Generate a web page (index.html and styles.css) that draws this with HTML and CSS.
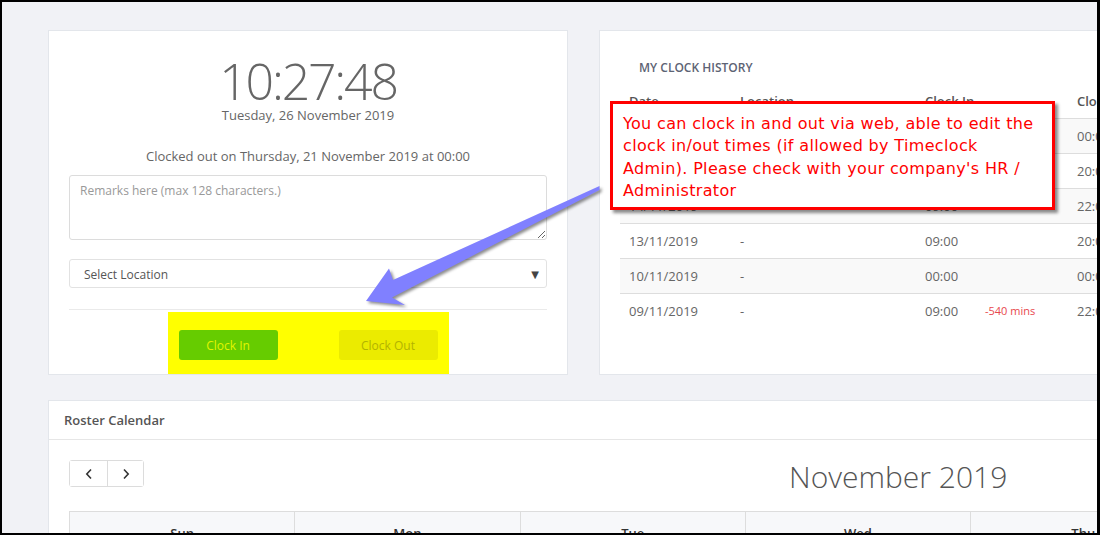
FILE: index.html
```html
<!DOCTYPE html>
<html lang="en">
<head>
    <meta charset="UTF-8">
    <meta name="viewport" content="width=device-width, initial-scale=1.0">
    <title>Timeclock</title>
    <link rel="stylesheet" href="styles.css">
</head>
<body>
    <div class="frame">
        <div class="page">
            <div class="top-row">
                <!-- Clock in / out panel -->
                <section class="card clock-card">
                    <div class="clock-time">10:27:48</div>
                    <div class="clock-date">Tuesday, 26 November 2019</div>
                    <div class="clock-status">Clocked out on Thursday, 21 November 2019 at 00:00</div>
                    <textarea class="remarks" placeholder="Remarks here (max 128 characters.)"></textarea>
                    <div class="location-select">
                        <span>Select Location</span>
                        <span class="caret">&#9660;</span>
                    </div>
                    <div class="clock-actions">
                        <div class="highlight">
                            <button class="btn btn-in">Clock In</button>
                            <button class="btn btn-out">Clock Out</button>
                        </div>
                    </div>
                </section>

                <!-- History table -->
                <section class="card history-card">
                    <h2 class="history-title">MY CLOCK HISTORY</h2>
                    <table class="history">
                        <colgroup>
                            <col class="c-date"><col class="c-loc"><col class="c-in"><col class="c-late"><col class="c-out">
                        </colgroup>
                        <thead>
                            <tr><th>Date</th><th>Location</th><th>Clock In</th><th></th><th>Clock Out</th></tr>
                        </thead>
                        <tbody>
                            <tr><td>21/11/2019</td><td>-</td><td>00:00</td><td></td><td>00:00</td></tr>
                            <tr><td>20/11/2019</td><td>-</td><td>09:00</td><td></td><td>20:00</td></tr>
                            <tr><td>14/11/2019</td><td>-</td><td>09:00</td><td></td><td>22:00</td></tr>
                            <tr><td>13/11/2019</td><td>-</td><td>09:00</td><td></td><td>20:00</td></tr>
                            <tr><td>10/11/2019</td><td>-</td><td>00:00</td><td></td><td>00:00</td></tr>
                            <tr><td>09/11/2019</td><td>-</td><td>09:00</td><td class="late">-540 mins</td><td>22:00</td></tr>
                        </tbody>
                    </table>
                </section>
            </div>

            <!-- Roster calendar -->
            <section class="card roster-card">
                <div class="roster-head">Roster Calendar</div>
                <div class="roster-body">
                    <div class="cal-toolbar">
                        <div class="nav-group">
                            <button class="nav-btn"><svg width="8" height="12" viewBox="0 0 8 12"><polyline points="6,1.5 1.8,6 6,10.5" /></svg></button>
                            <button class="nav-btn"><svg width="8" height="12" viewBox="0 0 8 12"><polyline points="2,1.5 6.2,6 2,10.5" /></svg></button>
                        </div>
                        <h3 class="cal-title">November 2019</h3>
                    </div>
                    <table class="cal">
                        <thead>
                            <tr><th>Sun</th><th>Mon</th><th>Tue</th><th>Wed</th><th>Thu</th><th>Fri</th><th>Sat</th></tr>
                        </thead>
                    </table>
                </div>
            </section>
        </div>

        <!-- annotation drawn over the screenshot -->
        <div class="callout">
            You can clock in and out via web, able to edit the<br>
            clock in/out times (if allowed by Timeclock<br>
            Admin). Please check with your company's HR /<br>
            Administrator
        </div>
        <svg class="arrow" width="1100" height="535" viewBox="0 0 1100 535">
            <polygon points="599.5,186 393,280 389,268.5 366,301 405,305 392,297.5 599.5,190" />
        </svg>
    </div>
</body>
</html>
```

FILE: styles.css
```css
body {
    margin: 0;
    font-family: "Open Sans", sans-serif;
    color: #666;
}
.frame {
    position: relative;
    width: 1100px;
    height: 535px;
    box-sizing: border-box;
    border: 2px solid #000;
    border-right-width: 3px;
    background: #f1f2f6;
    overflow: hidden;
}
.page {
    padding: 28px 0 0 46px;
    width: 1700px;
}
.top-row {
    display: flex;
    gap: 31px;
}
.card {
    background: #fff;
    border: 1px solid #e3e6eb;
    box-sizing: border-box;
}

/* clock panel */
.clock-card {
    width: 520px;
    padding: 25px 20px 0;
    text-align: center;
}
.clock-time {
    font-size: 50px;
    line-height: 50px;
    font-weight: 300;
    letter-spacing: -2.2px;
    color: #666;
}
.clock-date {
    font-size: 13px;
    line-height: 18px;
}
.clock-status {
    margin-top: 23px;
    font-size: 13px;
    line-height: 18px;
}
.remarks {
    display: block;
    width: 100%;
    height: 65px;
    margin-top: 10px;
    box-sizing: border-box;
    padding: 6px 10px;
    border: 1px solid #dcdcdc;
    border-radius: 3px;
    font-family: "Open Sans", sans-serif;
    font-size: 12px;
    color: #555;
    resize: vertical;
}
.remarks::placeholder {
    color: #999;
}
.location-select {
    display: flex;
    justify-content: space-between;
    align-items: center;
    height: 29px;
    margin-top: 19px;
    box-sizing: border-box;
    padding: 1px 7px 0 14px;
    border: 1px solid #e2e2e2;
    border-radius: 3px;
    font-size: 12px;
    color: #555;
    text-align: left;
}
.caret {
    font-family: "DejaVu Sans", sans-serif;
    font-size: 10px;
    color: #444;
}
.clock-actions {
    margin-top: 21px;
    border-top: 1px solid #eaeaea;
    padding-top: 2px;
    display: flex;
    justify-content: center;
}
.highlight {
    display: flex;
    gap: 61px;
    padding: 18px 11px 14px;
    background: #ffff00;
}
.btn {
    width: 99px;
    height: 30px;
    border: 0;
    border-radius: 3px;
    font-family: "Open Sans", sans-serif;
    font-size: 12px;
}
.btn-in {
    background: #66cc00;
    color: #e2f500;
}
.btn-out {
    background: #ebeb00;
    color: #b3b300;
}

/* history panel */
.history-card {
    width: 560px;
    padding: 29px 20px 0;
}
.history-title {
    margin: 0 0 8px 19px;
    font-size: 12px;
    line-height: 16px;
    font-weight: 600;
    color: #5d6374;
}
.history {
    width: 540px;
    table-layout: fixed;
    border-collapse: separate;
    border-spacing: 0;
    font-size: 13px;
}
.c-date { width: 111px; }
.c-loc { width: 185px; }
.c-in { width: 60px; }
.c-late { width: 92px; }
.c-out { width: 92px; }
.history th,
.history td {
    padding: 8px 9px;
    line-height: 18px;
    text-align: left;
    white-space: nowrap;
    overflow: hidden;
}
.history th {
    font-weight: 600;
    color: #555;
}
.history td {
    border-top: 1px solid #dddddd;
    color: #666;
}
.history tbody tr:nth-child(odd) td {
    background: #f9f9f9;
}
.history td.late {
    font-size: 11px;
    color: #e8474d;
}

/* roster calendar */
.roster-card {
    width: 1620px;
    margin-top: 25px;
}
.roster-head {
    height: 38px;
    line-height: 38px;
    padding: 0 15px;
    border-bottom: 1px solid #e6e6e6;
    font-size: 13px;
    font-weight: 600;
    color: #555;
}
.roster-body {
    padding: 20px;
}
.cal-toolbar {
    display: flex;
    align-items: flex-start;
}
.nav-group {
    display: flex;
    border: 1px solid #dcdcdc;
    border-radius: 3px;
}
.nav-btn {
    width: 37px;
    height: 25px;
    padding: 0;
    border: 0;
    background: #fff;
    display: flex;
    align-items: center;
    justify-content: center;
}
.nav-btn + .nav-btn {
    width: 36px;
    border-left: 1px solid #dcdcdc;
}
.nav-btn polyline {
    fill: none;
    stroke: #333;
    stroke-width: 1.6;
}
.cal-title {
    margin: 0 0 0 645px;
    font-size: 30px;
    line-height: 34px;
    font-weight: 300;
    color: #555;
}
.cal {
    width: 100%;
    margin-top: 17px;
    table-layout: fixed;
    border-collapse: collapse;
}
.cal th {
    padding: 12px 0;
    line-height: 18px;
    border: 1px solid #dddddd;
    background: #f7f8fa;
    font-size: 13px;
    font-weight: 600;
    color: #333;
}

/* annotation */
.callout {
    position: absolute;
    left: 608px;
    top: 99px;
    width: 445px;
    height: 109px;
    box-sizing: border-box;
    padding: 9px 6px 0 10px;
    border: 3px solid #ff0000;
    background: #fff;
    box-shadow: 3px 3px 3px rgba(0, 0, 0, 0.45);
    font-family: "DejaVu Sans", sans-serif;
    font-size: 16px;
    line-height: 22.4px;
    letter-spacing: 0.34px;
    white-space: nowrap;
    color: #ff0000;
}
.arrow {
    position: absolute;
    left: -2px;
    top: -2px;
    pointer-events: none;
}
.arrow polygon {
    fill: #8080ff;
    filter: drop-shadow(2px 2px 1.5px rgba(0, 0, 0, 0.45));
}
```
